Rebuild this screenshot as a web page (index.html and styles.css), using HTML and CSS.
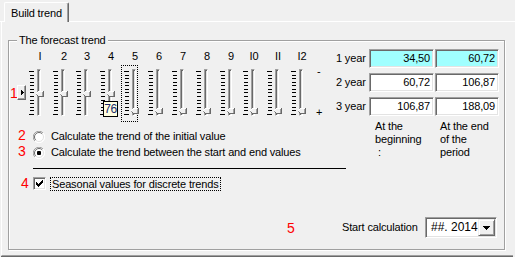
FILE: index.html
```html
<!DOCTYPE html>
<html>
<head>
<meta charset="utf-8">
<link rel="stylesheet" href="styles.css">
</head>
<body>
<div class="tabstrip">
  <div class="tab-edge"></div>
  <div class="tab">Build trend</div>
  <div class="tab-rest"></div>
</div>
<div class="panel">
  <div class="group">
    <div class="legend">The forecast trend</div>
    <div class="top">
      <div class="left">
        <div class="trackrow">
          <div class="marker">
            <span class="red red-1">1</span>
            <span class="spin"><svg width="3" height="5" viewBox="0 0 3 5" shape-rendering="crispEdges"><rect x="0" y="0" width="1" height="5" fill="#000"/><rect x="1" y="1" width="1" height="3" fill="#000"/><rect x="2" y="2" width="1" height="1" fill="#000"/></svg></span>
          </div>
          <div class="slot"><div class="num">I</div><div class="ctl"><div class="ticks"><i></i><i></i><i></i><i></i><i></i><i></i><i></i><i></i><i></i><i></i><i></i><i></i><i></i></div><div class="track"></div><svg class="thumb mid" width="9" height="6" viewBox="0 0 9 6" shape-rendering="crispEdges"><polygon points="0,3 3,0 9,0 9,6 3,6" fill="#f0f0f0"/><rect x="3" y="0" width="5" height="1" fill="#fff"/><rect x="2" y="1" width="1" height="1" fill="#fff"/><rect x="1" y="2" width="1" height="1" fill="#fff"/><rect x="8" y="0" width="1" height="6" fill="#696969"/><rect x="3" y="5" width="6" height="1" fill="#696969"/><rect x="2" y="4" width="1" height="1" fill="#696969"/><rect x="1" y="3" width="1" height="1" fill="#a0a0a0"/><rect x="7" y="1" width="1" height="4" fill="#a0a0a0"/></svg></div></div>
          <div class="slot n"><div class="num">2</div><div class="ctl"><div class="ticks"><i></i><i></i><i></i><i></i><i></i><i></i><i></i><i></i><i></i><i></i><i></i><i></i><i></i></div><div class="track"></div><svg class="thumb mid" width="9" height="6" viewBox="0 0 9 6" shape-rendering="crispEdges"><polygon points="0,3 3,0 9,0 9,6 3,6" fill="#f0f0f0"/><rect x="3" y="0" width="5" height="1" fill="#fff"/><rect x="2" y="1" width="1" height="1" fill="#fff"/><rect x="1" y="2" width="1" height="1" fill="#fff"/><rect x="8" y="0" width="1" height="6" fill="#696969"/><rect x="3" y="5" width="6" height="1" fill="#696969"/><rect x="2" y="4" width="1" height="1" fill="#696969"/><rect x="1" y="3" width="1" height="1" fill="#a0a0a0"/><rect x="7" y="1" width="1" height="4" fill="#a0a0a0"/></svg></div></div>
          <div class="slot"><div class="num">3</div><div class="ctl"><div class="ticks"><i></i><i></i><i></i><i></i><i></i><i></i><i></i><i></i><i></i><i></i><i></i><i></i><i></i></div><div class="track"></div><svg class="thumb mid" width="9" height="6" viewBox="0 0 9 6" shape-rendering="crispEdges"><polygon points="0,3 3,0 9,0 9,6 3,6" fill="#f0f0f0"/><rect x="3" y="0" width="5" height="1" fill="#fff"/><rect x="2" y="1" width="1" height="1" fill="#fff"/><rect x="1" y="2" width="1" height="1" fill="#fff"/><rect x="8" y="0" width="1" height="6" fill="#696969"/><rect x="3" y="5" width="6" height="1" fill="#696969"/><rect x="2" y="4" width="1" height="1" fill="#696969"/><rect x="1" y="3" width="1" height="1" fill="#a0a0a0"/><rect x="7" y="1" width="1" height="4" fill="#a0a0a0"/></svg></div></div>
          <div class="slot"><div class="num">4</div><div class="ctl"><div class="ticks"><i></i><i></i><i></i><i></i><i></i><i></i><i></i><i></i><i></i><i></i><i></i><i></i><i></i></div><div class="track"></div><svg class="thumb mid" width="9" height="6" viewBox="0 0 9 6" shape-rendering="crispEdges"><polygon points="0,3 3,0 9,0 9,6 3,6" fill="#f0f0f0"/><rect x="3" y="0" width="5" height="1" fill="#fff"/><rect x="2" y="1" width="1" height="1" fill="#fff"/><rect x="1" y="2" width="1" height="1" fill="#fff"/><rect x="8" y="0" width="1" height="6" fill="#696969"/><rect x="3" y="5" width="6" height="1" fill="#696969"/><rect x="2" y="4" width="1" height="1" fill="#696969"/><rect x="1" y="3" width="1" height="1" fill="#a0a0a0"/><rect x="7" y="1" width="1" height="4" fill="#a0a0a0"/></svg><div class="tip">76</div></div></div>
          <div class="slot"><div class="num">5</div><div class="ctl focus"><div class="ticks"><i></i><i></i><i></i><i></i><i></i><i></i><i></i><i></i><i></i><i></i><i></i><i></i><i></i></div><div class="track"></div><svg class="thumb low" width="9" height="6" viewBox="0 0 9 6" shape-rendering="crispEdges"><polygon points="0,3 3,0 9,0 9,6 3,6" fill="#f0f0f0"/><rect x="3" y="0" width="5" height="1" fill="#fff"/><rect x="2" y="1" width="1" height="1" fill="#fff"/><rect x="1" y="2" width="1" height="1" fill="#fff"/><rect x="8" y="0" width="1" height="6" fill="#696969"/><rect x="3" y="5" width="6" height="1" fill="#696969"/><rect x="2" y="4" width="1" height="1" fill="#696969"/><rect x="1" y="3" width="1" height="1" fill="#a0a0a0"/><rect x="7" y="1" width="1" height="4" fill="#a0a0a0"/></svg></div></div>
          <div class="slot"><div class="num">6</div><div class="ctl"><div class="ticks"><i></i><i></i><i></i><i></i><i></i><i></i><i></i><i></i><i></i><i></i><i></i><i></i><i></i></div><div class="track"></div><svg class="thumb low" width="9" height="6" viewBox="0 0 9 6" shape-rendering="crispEdges"><polygon points="0,3 3,0 9,0 9,6 3,6" fill="#f0f0f0"/><rect x="3" y="0" width="5" height="1" fill="#fff"/><rect x="2" y="1" width="1" height="1" fill="#fff"/><rect x="1" y="2" width="1" height="1" fill="#fff"/><rect x="8" y="0" width="1" height="6" fill="#696969"/><rect x="3" y="5" width="6" height="1" fill="#696969"/><rect x="2" y="4" width="1" height="1" fill="#696969"/><rect x="1" y="3" width="1" height="1" fill="#a0a0a0"/><rect x="7" y="1" width="1" height="4" fill="#a0a0a0"/></svg></div></div>
          <div class="slot"><div class="num">7</div><div class="ctl"><div class="ticks"><i></i><i></i><i></i><i></i><i></i><i></i><i></i><i></i><i></i><i></i><i></i><i></i><i></i></div><div class="track"></div><svg class="thumb low" width="9" height="6" viewBox="0 0 9 6" shape-rendering="crispEdges"><polygon points="0,3 3,0 9,0 9,6 3,6" fill="#f0f0f0"/><rect x="3" y="0" width="5" height="1" fill="#fff"/><rect x="2" y="1" width="1" height="1" fill="#fff"/><rect x="1" y="2" width="1" height="1" fill="#fff"/><rect x="8" y="0" width="1" height="6" fill="#696969"/><rect x="3" y="5" width="6" height="1" fill="#696969"/><rect x="2" y="4" width="1" height="1" fill="#696969"/><rect x="1" y="3" width="1" height="1" fill="#a0a0a0"/><rect x="7" y="1" width="1" height="4" fill="#a0a0a0"/></svg></div></div>
          <div class="slot"><div class="num">8</div><div class="ctl"><div class="ticks"><i></i><i></i><i></i><i></i><i></i><i></i><i></i><i></i><i></i><i></i><i></i><i></i><i></i></div><div class="track"></div><svg class="thumb low" width="9" height="6" viewBox="0 0 9 6" shape-rendering="crispEdges"><polygon points="0,3 3,0 9,0 9,6 3,6" fill="#f0f0f0"/><rect x="3" y="0" width="5" height="1" fill="#fff"/><rect x="2" y="1" width="1" height="1" fill="#fff"/><rect x="1" y="2" width="1" height="1" fill="#fff"/><rect x="8" y="0" width="1" height="6" fill="#696969"/><rect x="3" y="5" width="6" height="1" fill="#696969"/><rect x="2" y="4" width="1" height="1" fill="#696969"/><rect x="1" y="3" width="1" height="1" fill="#a0a0a0"/><rect x="7" y="1" width="1" height="4" fill="#a0a0a0"/></svg></div></div>
          <div class="slot n"><div class="num">9</div><div class="ctl"><div class="ticks"><i></i><i></i><i></i><i></i><i></i><i></i><i></i><i></i><i></i><i></i><i></i><i></i><i></i></div><div class="track"></div><svg class="thumb low" width="9" height="6" viewBox="0 0 9 6" shape-rendering="crispEdges"><polygon points="0,3 3,0 9,0 9,6 3,6" fill="#f0f0f0"/><rect x="3" y="0" width="5" height="1" fill="#fff"/><rect x="2" y="1" width="1" height="1" fill="#fff"/><rect x="1" y="2" width="1" height="1" fill="#fff"/><rect x="8" y="0" width="1" height="6" fill="#696969"/><rect x="3" y="5" width="6" height="1" fill="#696969"/><rect x="2" y="4" width="1" height="1" fill="#696969"/><rect x="1" y="3" width="1" height="1" fill="#a0a0a0"/><rect x="7" y="1" width="1" height="4" fill="#a0a0a0"/></svg></div></div>
          <div class="slot"><div class="num">I0</div><div class="ctl"><div class="ticks"><i></i><i></i><i></i><i></i><i></i><i></i><i></i><i></i><i></i><i></i><i></i><i></i><i></i></div><div class="track"></div><svg class="thumb low" width="9" height="6" viewBox="0 0 9 6" shape-rendering="crispEdges"><polygon points="0,3 3,0 9,0 9,6 3,6" fill="#f0f0f0"/><rect x="3" y="0" width="5" height="1" fill="#fff"/><rect x="2" y="1" width="1" height="1" fill="#fff"/><rect x="1" y="2" width="1" height="1" fill="#fff"/><rect x="8" y="0" width="1" height="6" fill="#696969"/><rect x="3" y="5" width="6" height="1" fill="#696969"/><rect x="2" y="4" width="1" height="1" fill="#696969"/><rect x="1" y="3" width="1" height="1" fill="#a0a0a0"/><rect x="7" y="1" width="1" height="4" fill="#a0a0a0"/></svg></div></div>
          <div class="slot"><div class="num">II</div><div class="ctl"><div class="ticks"><i></i><i></i><i></i><i></i><i></i><i></i><i></i><i></i><i></i><i></i><i></i><i></i><i></i></div><div class="track"></div><svg class="thumb low" width="9" height="6" viewBox="0 0 9 6" shape-rendering="crispEdges"><polygon points="0,3 3,0 9,0 9,6 3,6" fill="#f0f0f0"/><rect x="3" y="0" width="5" height="1" fill="#fff"/><rect x="2" y="1" width="1" height="1" fill="#fff"/><rect x="1" y="2" width="1" height="1" fill="#fff"/><rect x="8" y="0" width="1" height="6" fill="#696969"/><rect x="3" y="5" width="6" height="1" fill="#696969"/><rect x="2" y="4" width="1" height="1" fill="#696969"/><rect x="1" y="3" width="1" height="1" fill="#a0a0a0"/><rect x="7" y="1" width="1" height="4" fill="#a0a0a0"/></svg></div></div>
          <div class="slot"><div class="num">I2</div><div class="ctl"><div class="ticks"><i></i><i></i><i></i><i></i><i></i><i></i><i></i><i></i><i></i><i></i><i></i><i></i><i></i></div><div class="track"></div><svg class="thumb low" width="9" height="6" viewBox="0 0 9 6" shape-rendering="crispEdges"><polygon points="0,3 3,0 9,0 9,6 3,6" fill="#f0f0f0"/><rect x="3" y="0" width="5" height="1" fill="#fff"/><rect x="2" y="1" width="1" height="1" fill="#fff"/><rect x="1" y="2" width="1" height="1" fill="#fff"/><rect x="8" y="0" width="1" height="6" fill="#696969"/><rect x="3" y="5" width="6" height="1" fill="#696969"/><rect x="2" y="4" width="1" height="1" fill="#696969"/><rect x="1" y="3" width="1" height="1" fill="#a0a0a0"/><rect x="7" y="1" width="1" height="4" fill="#a0a0a0"/></svg></div></div>
          <div class="signs"><span class="minus">-</span><span class="plus">+</span></div>
        </div>
        <div class="opt first">
          <span class="red red-opt">2</span>
          <svg class="radio" width="12" height="12" viewBox="0 0 12 12"><circle cx="6" cy="6" r="5.5" fill="#fff"/><path d="M1.9 10.1 A5.5 5.5 0 0 1 10.1 1.9" fill="none" stroke="#a0a0a0"/><path d="M10.1 1.9 A5.5 5.5 0 0 1 1.9 10.1" fill="none" stroke="#fff"/><path d="M2.8 9.2 A4.5 4.5 0 0 1 9.2 2.8" fill="none" stroke="#696969"/><path d="M9.2 2.8 A4.5 4.5 0 0 1 2.8 9.2" fill="none" stroke="#e3e3e3"/></svg>
          <span class="opt-text">Calculate the trend of the initial value</span>
        </div>
        <div class="opt">
          <span class="red red-opt">3</span>
          <svg class="radio" width="12" height="12" viewBox="0 0 12 12"><circle cx="6" cy="6" r="5.5" fill="#fff"/><path d="M1.9 10.1 A5.5 5.5 0 0 1 10.1 1.9" fill="none" stroke="#a0a0a0"/><path d="M10.1 1.9 A5.5 5.5 0 0 1 1.9 10.1" fill="none" stroke="#fff"/><path d="M2.8 9.2 A4.5 4.5 0 0 1 9.2 2.8" fill="none" stroke="#696969"/><path d="M9.2 2.8 A4.5 4.5 0 0 1 2.8 9.2" fill="none" stroke="#e3e3e3"/><rect x="4" y="4" width="4" height="4" rx="1" fill="#000"/></svg>
          <span class="opt-text">Calculate the trend between the start and end values</span>
        </div>
      </div>
      <div class="right">
        <div class="yrow first"><span class="ylabel">1 year</span><span class="field cyan">34,50</span><span class="field second cyan">60,72</span></div>
        <div class="yrow"><span class="ylabel">2 year</span><span class="field">60,72</span><span class="field second">106,87</span></div>
        <div class="yrow"><span class="ylabel">3 year</span><span class="field">106,87</span><span class="field second">188,09</span></div>
        <div class="caps">
          <div class="cap cap-a"><div class="ln">At the</div><div class="ln">beginning</div><div class="ln frag">:</div></div>
          <div class="cap"><div class="ln">At the end</div><div class="ln">of the</div><div class="ln">period</div></div>
        </div>
      </div>
    </div>
    <div class="rule"></div>
    <div class="check-row">
      <span class="red red-4">4</span>
      <span class="checkbox"><svg width="7" height="7" viewBox="0 0 7 7" shape-rendering="crispEdges"><path d="M0 2h1v3h-1zM1 3h1v3h-1zM2 4h1v3h-1zM3 3h1v3h-1zM4 2h1v3h-1zM5 1h1v3h-1zM6 0h1v3h-1z" fill="#000"/></svg></span>
      <span class="focus-label">Seasonal values for discrete trends</span>
    </div>
    <div class="calc-row">
      <span class="red red-5">5</span>
      <span class="calc-label">Start calculation</span>
      <div class="combo">
        <span class="combo-text">##. 2014</span>
        <span class="combo-btn"><svg width="7" height="4" viewBox="0 0 7 4" shape-rendering="crispEdges"><path d="M0 0h7v1h-7zM1 1h5v1h-5zM2 2h3v1h-3zM3 3h1v1h-1z" fill="#000"/></svg></span>
      </div>
    </div>
  </div>
</div>
</body>
</html>
```
FILE: styles.css
```css
html, body {
  margin: 0;
  padding: 0;
}
body {
  background: #f0f0f0;
  font-family: "Liberation Sans", Arial, sans-serif;
  font-size: 11px;
  line-height: 13px;
  letter-spacing: -0.15px;
  color: #000;
  width: 515px;
  height: 257px;
  overflow: hidden;
}

/* tabs */
.tabstrip {
  display: flex;
  align-items: flex-end;
  height: 22px;
}
.tab-edge {
  width: 4px;
  border-bottom: 1px solid #fff;
}
.tab {
  box-sizing: border-box;
  width: 65px;
  height: 20px;
  border: 1px solid #fff;
  border-bottom: none;
  border-right-color: #696969;
  border-radius: 2px 2px 0 0;
  box-shadow: inset -1px 0 #a0a0a0;
  padding: 4px 0 0 6px;
  white-space: nowrap;
}
.tab-rest {
  flex: 1;
  border-bottom: 1px solid #fff;
}
.panel {
  box-sizing: border-box;
  margin-left: 1px;
  width: 512px;
  height: 234px;
  padding: 18px 0 0 6px;
  border-left: 1px solid #fff;
  border-bottom: 1px solid #a0a0a0;
  box-shadow: 0 1px #696969;
}

/* group box */
.group {
  box-sizing: border-box;
  width: 497px;
  height: 210px;
  border: 1px solid #a0a0a0;
  box-shadow: inset 1px 1px #fff, 1px 1px #fff;
  display: flex;
  flex-direction: column;
}
.legend {
  align-self: flex-start;
  margin: -7px 0 0 8px;
  padding: 0 2px;
  height: 13px;
  background: #f0f0f0;
}
.top {
  display: flex;
}
.left {
  width: 327px;
  flex: none;
}
.right {
  flex: 1;
}

/* trackbars */
.trackrow {
  display: flex;
  margin-top: 3px;
}
.marker {
  width: 17px;
  flex: none;
  display: flex;
  align-items: flex-start;
  padding-top: 35px;
}
.red {
  color: #f00;
  font-size: 14px;
  line-height: 14px;
  letter-spacing: 0;
}
.red-1 {
  display: block;
  width: 7px;
  margin-left: 1px;
  margin-top: 1px;
}
.spin {
  box-sizing: border-box;
  width: 9px;
  height: 15px;
  border: 1px solid;
  border-color: #fff #696969 #696969 #fff;
  box-shadow: inset -1px -1px #a0a0a0;
  background: #f0f0f0;
  display: flex;
  align-items: center;
  justify-content: center;
}
.spin svg {
  display: block;
  margin-left: 1px;
}
.slot {
  width: 24px;
  flex: none;
  display: flex;
  flex-direction: column;
}
.slot.n {
  width: 23px;
}
.num {
  width: 20px;
  margin-left: 4px;
  height: 13px;
  text-align: center;
  white-space: nowrap;
  letter-spacing: 0;
}
.ctl {
  position: relative;
  box-sizing: border-box;
  margin-top: 2px;
  width: 17px;
  height: 57px;
  border: 1px dotted transparent;
  display: flex;
  align-items: flex-start;
}
.ctl.focus {
  border-color: #000;
}
.ticks {
  margin: 5px 0 0 3px;
  width: 4px;
  height: 44px;
  display: flex;
  flex-direction: column;
  justify-content: space-between;
}
.ticks i {
  display: block;
  height: 1px;
  background: #000;
}
.ticks i:first-child,
.ticks i:last-child {
  margin-left: -1px;
}
.track {
  box-sizing: border-box;
  margin: 3px 0 0 3px;
  width: 4px;
  height: 47px;
  border-left: 1px solid #a0a0a0;
  border-top: 1px solid #a0a0a0;
  border-right: 1px solid #fff;
  border-bottom: 1px solid #fff;
  background: #e3e3e3;
  box-shadow: inset 1px 1px #696969;
}
.thumb {
  position: absolute;
  left: 8px;
  display: block;
}
.thumb.mid {
  top: 25px;
}
.thumb.low {
  top: 42px;
}
.tip {
  position: absolute;
  left: 5px;
  top: 35px;
  z-index: 2;
  box-sizing: border-box;
  width: 15px;
  height: 16px;
  border: 1px solid #000;
  background: #ffffe1;
  color: #1a2a6c;
  font-size: 12px;
  line-height: 14px;
  text-align: center;
  letter-spacing: -0.5px;
}
.signs {
  width: 22px;
  flex: none;
  margin-top: 15px;
  padding-left: 4px;
  box-sizing: border-box;
  display: flex;
  flex-direction: column;
  align-items: flex-start;
}
.minus {
  display: block;
  height: 13px;
  padding-left: 1px;
}
.plus {
  display: block;
  margin-top: 28px;
}

/* options */
.opt {
  display: flex;
  align-items: flex-start;
  height: 16px;
  line-height: 16px;
}
.opt.first {
  margin-top: 6px;
}
.red-opt {
  display: block;
  width: 15px;
  margin-left: 9px;
  line-height: 14px;
  margin-top: 0;
}
.radio {
  display: block;
  margin-top: 3px;
  flex: none;
}
.opt-text {
  margin-left: 6px;
  white-space: nowrap;
}

/* year table */
.yrow {
  display: flex;
  align-items: center;
  height: 19px;
  margin-top: 5px;
}
.yrow.first {
  margin-top: 2px;
}
.ylabel {
  width: 33px;
  flex: none;
  white-space: nowrap;
}
.field {
  box-sizing: border-box;
  width: 65px;
  height: 19px;
  border: 1px solid;
  border-color: #a0a0a0 #fff #fff #a0a0a0;
  box-shadow: inset 1px 1px #696969, inset -1px -1px #e3e3e3;
  background: #fff;
  text-align: right;
  padding-right: 3px;
  line-height: 17px;
  flex: none;
}
.field.second {
  width: 64px;
  margin-left: 1px;
}
.field.cyan {
  background: #a0ffff;
}
.caps {
  display: flex;
  margin-top: 4px;
  padding-left: 39px;
}
.cap {
  width: 65px;
}
.ln {
  height: 13px;
  white-space: nowrap;
}
.ln.frag {
  padding-left: 3px;
}

/* rule + checkbox */
.rule {
  margin: 8px 0 0 24px;
  width: 313px;
  height: 1px;
  background: #000;
}
.check-row {
  display: flex;
  align-items: flex-start;
  margin-top: 8px;
  height: 14px;
}
.red-4 {
  display: block;
  width: 12px;
  margin-left: 12px;
  margin-top: -1px;
}
.checkbox {
  box-sizing: border-box;
  width: 13px;
  height: 13px;
  border: 1px solid;
  border-color: #a0a0a0 #fff #fff #a0a0a0;
  box-shadow: inset 1px 1px #696969, inset -1px -1px #e3e3e3;
  background: #fff;
  display: flex;
  align-items: center;
  justify-content: center;
  flex: none;
}
.checkbox svg {
  display: block;
}
.focus-label {
  margin-left: 4px;
  border: 1px dotted #000;
  padding: 0 1px;
  line-height: 12px;
  white-space: nowrap;
}

/* start calculation */
.calc-row {
  display: flex;
  align-items: center;
  margin-top: 26px;
  height: 21px;
}
.red-5 {
  display: block;
  width: 55px;
  margin-left: 278px;
}
.calc-label {
  width: 83px;
  white-space: nowrap;
}
.combo {
  box-sizing: border-box;
  width: 72px;
  height: 21px;
  border: 1px solid;
  border-color: #a0a0a0 #fff #fff #a0a0a0;
  box-shadow: inset 1px 1px #696969, inset -1px -1px #e3e3e3;
  background: #fff;
  display: flex;
  align-items: center;
  padding: 1px 1px 1px 5px;
}
.combo-text {
  flex: 1;
  min-width: 0;
  font-size: 12px;
  letter-spacing: 0;
  white-space: nowrap;
}
.combo-btn {
  box-sizing: border-box;
  flex: none;
  width: 17px;
  height: 17px;
  border: 1px solid;
  border-color: #f0f0f0 #696969 #696969 #f0f0f0;
  box-shadow: inset 1px 1px #fff, inset -1px -1px #a0a0a0;
  background: #f0f0f0;
  display: flex;
  align-items: center;
  justify-content: center;
}
.combo-btn svg {
  display: block;
}
```
